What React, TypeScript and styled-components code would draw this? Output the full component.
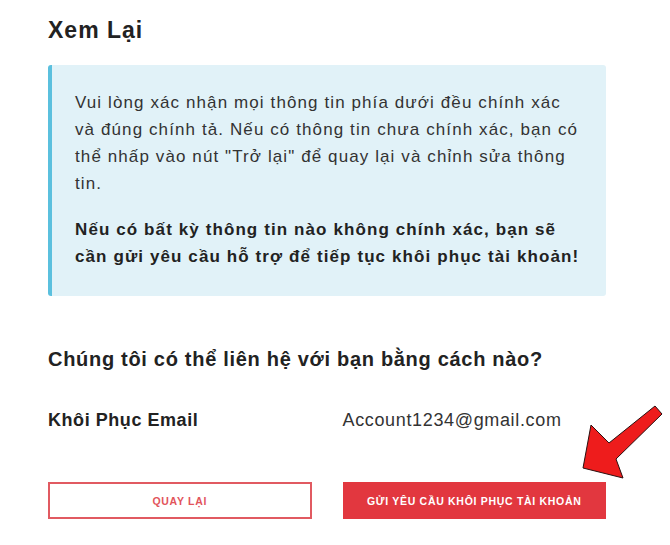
import React from "react";
import styled, { createGlobalStyle } from "styled-components";

const GlobalStyle = createGlobalStyle`
  * {
    box-sizing: border-box;
  }
  body {
    margin: 0;
    background: #ffffff;
    font-family: "Liberation Sans", Arial, sans-serif;
    color: #333333;
  }
`;

const Page = styled.div`
  position: relative;
  width: 670px;
  height: 545px;
  padding: 16px 64px 0 48px;
  overflow: hidden;
`;

const Title = styled.h2`
  margin: 0;
  font-size: 23px;
  line-height: 28px;
  font-weight: 700;
  letter-spacing: 1px;
  color: #222222;
`;

const Notice = styled.div`
  margin-top: 21px;
  padding: 24px 24px 26px 23px;
  background: #e1f2f8;
  border-left: 4px solid #5bc0de;
  border-radius: 3px;
`;

const Paragraph = styled.p<{ $bold?: boolean }>`
  margin: 0;
  font-size: 17px;
  line-height: 27px;
  letter-spacing: ${(p) => (p.$bold ? "1.1px" : "1.1px")};
  font-weight: ${(p) => (p.$bold ? 700 : 400)};
  color: ${(p) => (p.$bold ? "#222222" : "#333333")};
  white-space: ${(p) => (p.$bold ? "nowrap" : "normal")};
  & + & {
    margin-top: 19px;
  }
`;

const Question = styled.h3`
  margin: 51px 0 0;
  font-size: 20px;
  line-height: 24px;
  font-weight: 700;
  letter-spacing: 0.7px;
  color: #222222;
`;

const Columns = styled.div`
  display: grid;
  grid-template-columns: 1fr 1fr;
  column-gap: 31px;
`;

const InfoRow = styled(Columns)`
  margin-top: 38px;
  align-items: center;
`;

const Label = styled.div`
  font-size: 18px;
  line-height: 22px;
  font-weight: 700;
  letter-spacing: 0.55px;
  color: #222222;
`;

const Value = styled.div`
  font-size: 18px;
  line-height: 22px;
  letter-spacing: 0.65px;
  color: #333333;
`;

const Actions = styled(Columns)`
  margin-top: 51px;
`;

const Button = styled.button<{ $primary?: boolean }>`
  height: 37px;
  border: 2px solid ${(p) => (p.$primary ? "#e2373f" : "#e15a61")};
  background: ${(p) => (p.$primary ? "#e2373f" : "#ffffff")};
  color: ${(p) => (p.$primary ? "#ffffff" : "#e2545b")};
  font-family: "Liberation Sans", Arial, sans-serif;
  font-size: 10.5px;
  font-weight: 700;
  letter-spacing: 0.7px;
  text-transform: uppercase;
  cursor: pointer;
`;

const Pointer = styled.svg`
  position: absolute;
  left: 575px;
  top: 405px;
  width: 95px;
  height: 80px;
`;

const Arrow = () => (
  <Pointer viewBox="0 0 95 80">
    <path
      d="M87 9 L80 1 L34 38 L16 20 L8 63 L48 73 L41 54 Z"
      fill="#ee1c1c"
      stroke="#2a1010"
      strokeWidth="1"
      strokeLinejoin="round"
    />
  </Pointer>
);

const App = () => {
  return (
    <>
      <GlobalStyle />
      <Page>
        <Title>Xem Lại</Title>
        <Notice>
          <Paragraph>
            Vui lòng xác nhận mọi thông tin phía dưới đều chính xác và đúng chính tả. Nếu có
            thông tin chưa chính xác, bạn có thể nhấp vào nút "Trở lại" để quay lại và chỉnh
            sửa thông tin.
          </Paragraph>
          <Paragraph $bold>
            Nếu có bất kỳ thông tin nào không chính xác, bạn sẽ
            <br />
            cần gửi yêu cầu hỗ trợ để tiếp tục khôi phục tài khoản!
          </Paragraph>
        </Notice>
        <Question>Chúng tôi có thể liên hệ với bạn bằng cách nào?</Question>
        <InfoRow>
          <Label>Khôi Phục Email</Label>
          <Value>Account1234@gmail.com</Value>
        </InfoRow>
        <Actions>
          <Button>Quay lại</Button>
          <Button $primary>Gửi yêu cầu khôi phục tài khoản</Button>
        </Actions>
        <Arrow />
      </Page>
    </>
  );
};

export default App;
